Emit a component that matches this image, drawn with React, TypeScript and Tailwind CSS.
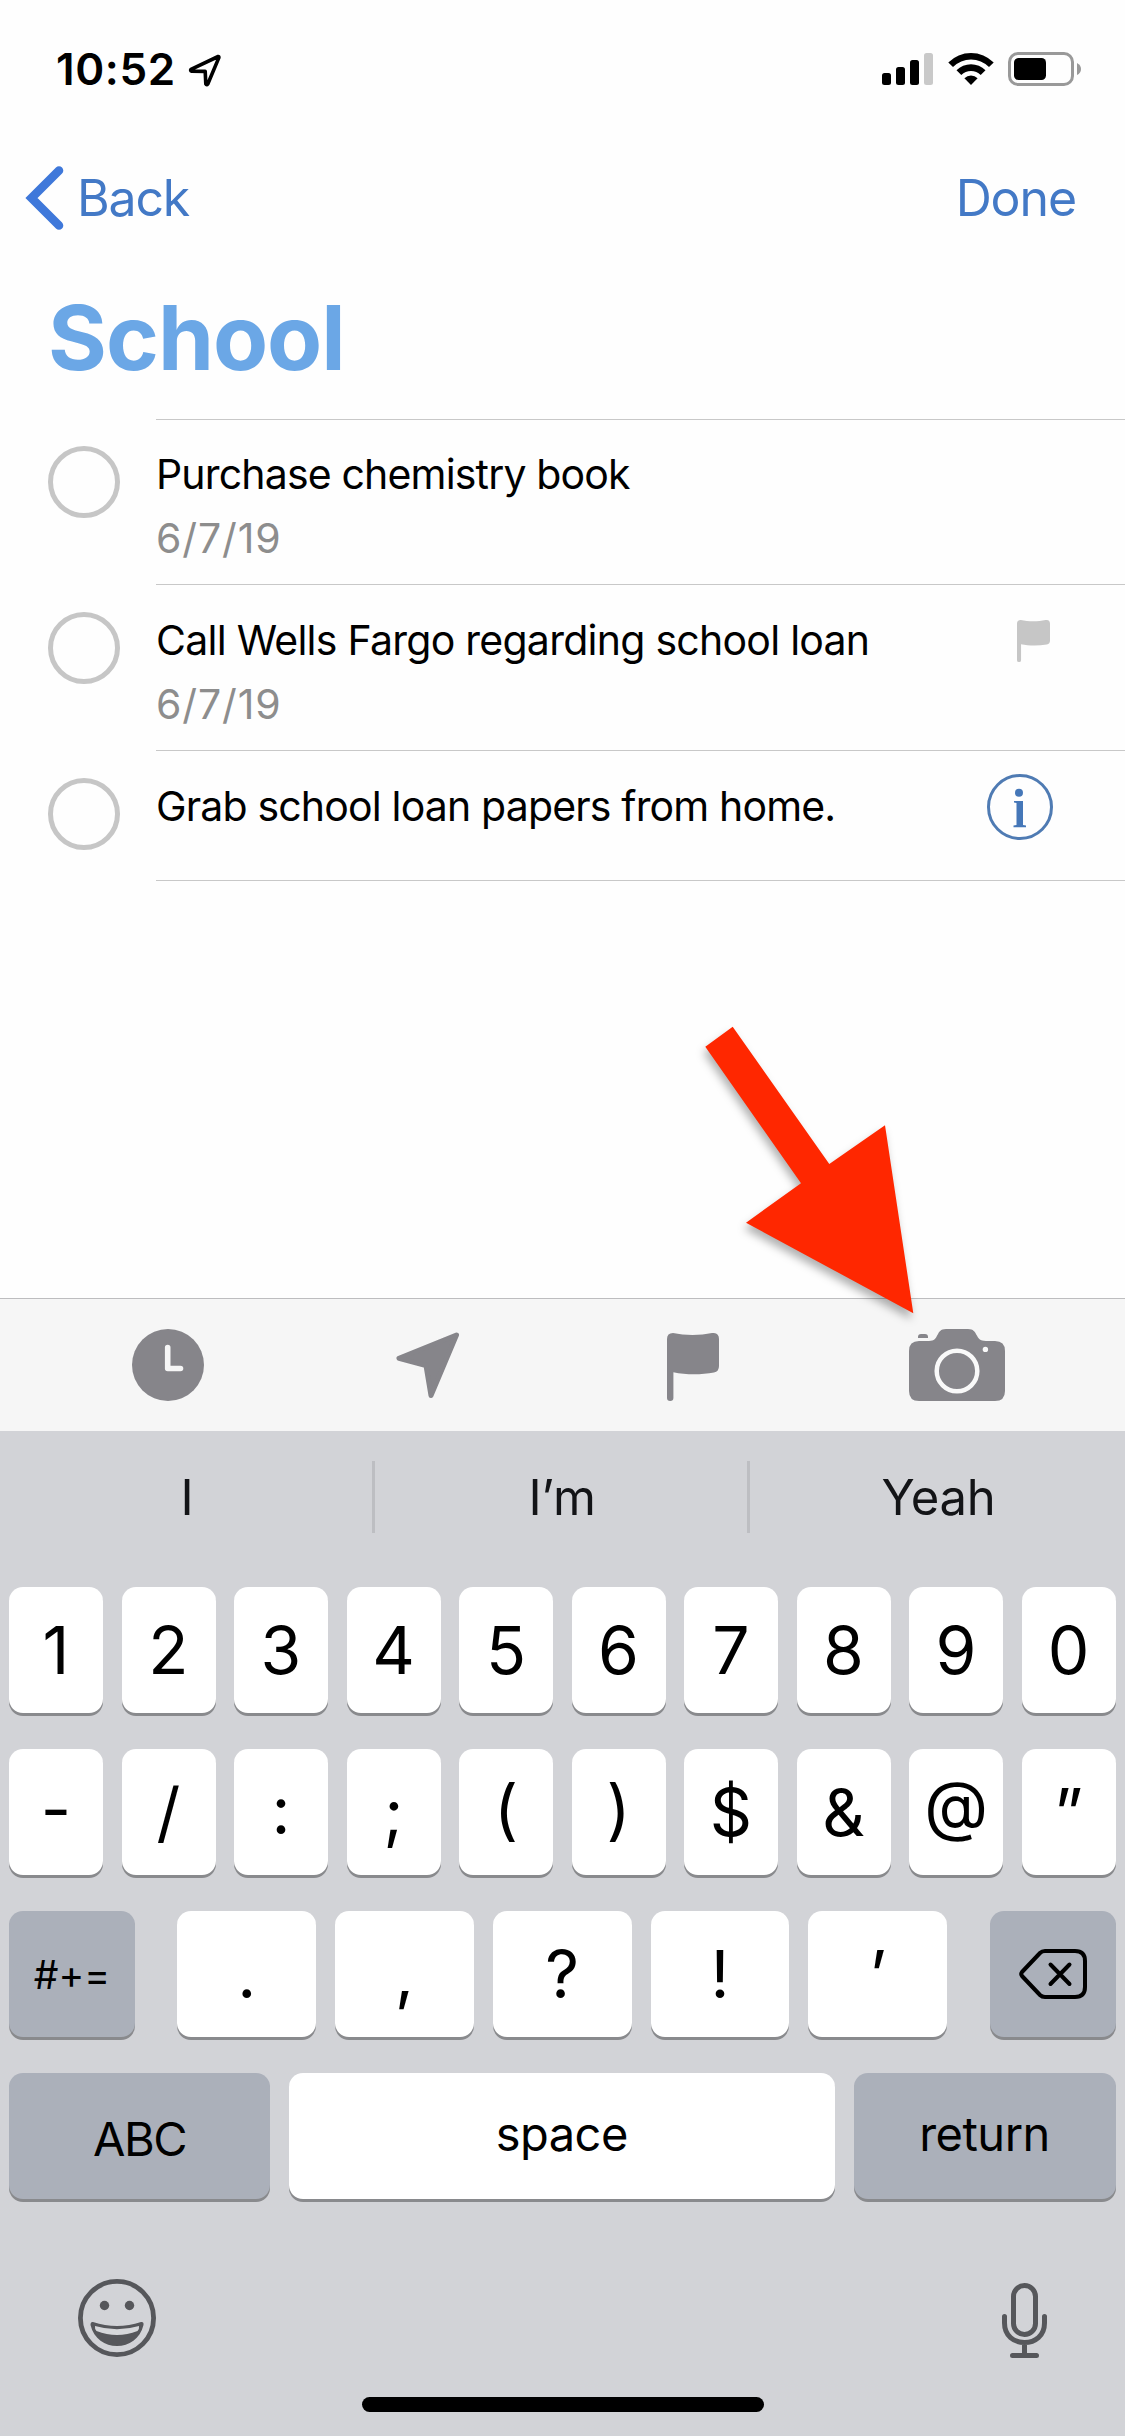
import React from 'react';
import clsx from 'clsx';

interface Reminder {
  title: string;
  date?: string;
  accessory?: 'flag' | 'info';
  rowClass: string;
  circleClass: string;
  titleClass: string;
}

const REMINDERS: Reminder[] = [
  { title: 'Purchase chemistry book', date: '6/7/19', rowClass: 'h-[165px] pt-[22px]', circleClass: 'mt-[27px]', titleClass: 'tracking-[-0.83px]' },
  { title: 'Call Wells Fargo regarding school loan', date: '6/7/19', accessory: 'flag', rowClass: 'h-[166px] pt-[23px]', circleClass: 'mt-[28px]', titleClass: 'tracking-[-0.74px]' },
  { title: 'Grab school loan papers from home.', accessory: 'info', rowClass: 'h-[130px] pt-[23px]', circleClass: 'mt-[28px]', titleClass: 'tracking-[-0.84px]' },
];

const SUGGESTIONS = ['I', 'I’m', 'Yeah'];
const NUMBER_ROW = ['1', '2', '3', '4', '5', '6', '7', '8', '9', '0'];
const SYMBOL_ROW = ['-', '/', ':', ';', '(', ')', '$', '&', '@', '”'];
const PUNCTUATION_ROW = ['.', ',', '?', '!', '’'];

function StatusBar() {
  return (
    <div className="flex h-[138px] items-center justify-between pl-[56px] pr-[43px]">
      <div className="flex items-center">
        <span className="w-[132px] text-[44px] font-semibold leading-none tracking-[0.6px] text-black">10:52</span>
        <svg width="34" height="34" viewBox="0 0 34 34" fill="none" className="mt-1">
          <path d="M30.2 2.5 L3 15.4 Q2 16.8 3.6 17.2 L17.2 17.4 L17.8 30 Q18.6 31.6 19.8 30 L30.9 3.6 Q31 2.4 30.2 2.5 Z" stroke="#000" strokeWidth="3.6" strokeLinejoin="round" />
        </svg>
      </div>
      <div className="flex items-center">
        {/* 信号 */}
        <svg width="52" height="34" viewBox="0 0 52 34">
          <rect x="0" y="21" width="9" height="12" rx="2.5" />
          <rect x="14" y="15" width="9" height="18" rx="2.5" />
          <rect x="28" y="8" width="9" height="25" rx="2.5" />
          <rect x="42" y="1" width="9" height="32" rx="2.5" fill="#c9c9c9" />
        </svg>
        {/* Wi-Fi */}
        <svg width="46" height="34" viewBox="0 0 46 34" className="ml-[14px]">
          <path d="M0.3 10.4 A32 32 0 0 1 45.7 10.4 L41 15 A25.5 25.5 0 0 0 5 15 Z" />
          <path d="M8.5 18.2 A20.6 20.6 0 0 1 37.5 18.2 L32.7 23 A13.8 13.8 0 0 0 13.3 23 Z" />
          <path d="M16.4 26.2 A9.4 9.4 0 0 1 29.6 26.2 L23 33 Z" />
        </svg>
        {/* 电池 */}
        <svg width="74" height="34" viewBox="0 0 74 34" className="ml-[14px]">
          <rect x="1.5" y="1.5" width="63" height="31" rx="8.5" fill="none" stroke="#999" strokeWidth="3" />
          <rect x="6" y="6" width="32" height="22" rx="4.5" />
          <path d="M69 11 Q73 13 73 17 Q73 21 69 23 Z" fill="#999" />
        </svg>
      </div>
    </div>
  );
}

function NavBar() {
  return (
    <div className="flex h-[120px] items-center justify-between pl-[24px] pr-[49px] text-[50px] leading-none text-[#4379c6]">
      <button className="flex items-center">
        <svg width="42" height="66" viewBox="0 0 42 66" fill="none">
          <path d="M35 5.5 L7.5 33 L35 60.5" stroke="#3f78da" strokeWidth="8.6" strokeLinecap="round" strokeLinejoin="miter" />
        </svg>
        <span className="ml-[11px] tracking-[-1.2px]">Back</span>
      </button>
      <button className="tracking-[-1.1px]">Done</button>
    </div>
  );
}

function FlagIcon({ className }: { className: string }) {
  return (
    <svg viewBox="0 0 52 68" className={className} preserveAspectRatio="none">
      <path
        fill="currentColor"
        d="M0 6 Q0 0 6 0 C18 2.6 33 2.6 45 0 Q52 -0.5 52 6 V33 Q52 38.5 47 39.5 C34 42 19 42 6.4 39.2 V65 Q6.4 68 3.2 68 Q0 68 0 65 Z"
      />
    </svg>
  );
}

function InfoIcon() {
  return (
    <svg width="66" height="66" viewBox="0 0 66 66">
      <circle cx="33" cy="33" r="31.5" fill="none" stroke="#4f7bb3" strokeWidth="3" />
      <circle cx="32" cy="18.8" r="4" fill="#4577b8" />
      <path d="M27 27 H36 V51 L39 51.6 V53.2 H26.5 V51.6 L29.5 51 V29 L27 28.6 Z" fill="#4577b8" />
    </svg>
  );
}

function ReminderRow({ title, date, accessory, rowClass, circleClass, titleClass }: Reminder) {
  return (
    <li className="flex pl-[48px]">
      <span className={clsx('size-[72px] shrink-0 rounded-full border-[5px] border-[#c6c6c6]', circleClass)} />
      <div className={clsx('ml-[36px] flex flex-1 justify-between border-t border-[#c8c8c8]', rowClass)}>
        <div className="text-[41px] leading-[64px]">
          <div className={clsx('whitespace-nowrap text-black', titleClass)}>{title}</div>
          {date && <div className="tracking-[0.9px] text-[#8d8d8d]">{date}</div>}
        </div>
        {accessory === 'flag' && <FlagIcon className="mr-[75px] mt-[12px] h-[42px] w-[33px] text-[#c6c6c6]" />}
        {accessory === 'info' && (
          <button className="mr-[72px] self-start">
            <InfoIcon />
          </button>
        )}
      </div>
    </li>
  );
}

function Toolbar() {
  return (
    <div className="flex h-[133px] items-start border-t border-[#bdbdbf] bg-[#f6f6f6] pl-[132px] pt-[30px] text-[#86858a]">
      <svg width="72" height="72" viewBox="0 0 72 72">
        <circle cx="36" cy="36" r="36" fill="currentColor" />
        <path d="M35.7 18.5 V39.5 H48.5" fill="none" stroke="#f6f6f6" strokeWidth="5.6" strokeLinecap="round" strokeLinejoin="round" />
      </svg>
      <svg width="66" height="68" viewBox="0 0 66 68" className="ml-[191px] mt-[3px]">
        <path d="M61.5 3 L4 26.3 L31 33.5 L36 63.5 Z" fill="currentColor" stroke="currentColor" strokeWidth="5" strokeLinejoin="round" />
      </svg>
      <FlagIcon className="ml-[206px] mt-[4px] h-[68px] w-[52px]" />
      <svg width="96" height="73" viewBox="0 0 96 73" className="ml-[190px]">
        <path d="M9 9 V8 Q9 5 12 5 H16 Q19 5 19 8 V9 Z" fill="currentColor" />
        <path
          d="M10 12 H20 C31 12 26 0 37 0 H59 C70 0 65 12 77 12 H86 Q96 12 96 22 V62 Q96 72 86 72 H10 Q0 72 0 62 V22 Q0 12 10 12 Z"
          fill="currentColor"
        />
        <circle cx="48" cy="42" r="20.3" fill="none" stroke="#f9f9f9" strokeWidth="4.5" />
        <circle cx="76.4" cy="20.4" r="2.7" fill="#f9f9f9" />
      </svg>
    </div>
  );
}

function Key({ children, className, dark }: { children: React.ReactNode; className?: string; dark?: boolean }) {
  return (
    <button
      className={clsx(
        'flex h-[126px] items-center justify-center rounded-[14px] text-black shadow-[0_3px_0_#898a8d]',
        dark ? 'bg-[#abb0ba]' : 'bg-white',
        className,
      )}
    >
      {children}
    </button>
  );
}

function Keyboard() {
  return (
    <div className="flex h-[1005px] flex-col bg-[#d2d3d7]">
      <div className="grid h-[156px] grid-cols-[372px_375px_378px] items-start pt-[30px] text-[49px] leading-[72px] tracking-[-0.2px] text-[#131417]">
        {SUGGESTIONS.map((word, i) => (
          <div key={word} className={clsx('h-[72px] pl-[2px] pt-px text-center', i > 0 && 'border-l-[3px] border-[#bdbec2]')}>
            {word}
          </div>
        ))}
      </div>

      <div className="flex flex-col gap-9 pl-[9px] pr-[9.5px] text-[66px] leading-none">
        <div className="grid grid-cols-10 gap-[18.5px]">
          {NUMBER_ROW.map((k) => (
            <Key key={k}>{k}</Key>
          ))}
        </div>
        {/* case 特性让括号和 @ 与大写字母居中对齐，冒号除外 */}
        <div className="grid grid-cols-10 gap-[18.5px]">
          {SYMBOL_ROW.map((k) => (
            <Key key={k} className={k === ':' ? 'pb-[5px]' : "[font-feature-settings:'case']"}>
              {k}
            </Key>
          ))}
        </div>
        <div className="flex justify-between">
          <Key dark className="w-[126px] text-[39px]">#+=</Key>
          <div className="grid w-[770px] grid-cols-5 gap-[19px]">
            {PUNCTUATION_ROW.map((k) => (
              <Key key={k}>{k}</Key>
            ))}
          </div>
          <Key dark className="w-[126px]">
            <svg width="70" height="52" viewBox="0 0 70 52" fill="none" stroke="#000" strokeWidth="4" strokeLinecap="round" strokeLinejoin="round">
              <path d="M27 3 H57 Q67 3 67 13 V39 Q67 49 57 49 H27 Q24 49 22 47 L4 28 Q2.4 26 4 24 L22 5 Q24 3 27 3 Z" />
              <path d="M32.5 16.5 L51.5 36 M51.5 16.5 L32.5 36" />
            </svg>
          </Key>
        </div>
        <div className="flex gap-[18.5px] text-[47px] tracking-[-0.5px]">
          <Key dark className="w-[261px] pt-[5px] tracking-[-1.5px]">ABC</Key>
          <Key className="flex-1 pb-[5px]">space</Key>
          <Key dark className="w-[262px] pb-[5px]">return</Key>
        </div>
      </div>

      <div className="flex items-center justify-between pl-[78px] pr-[77px] pt-[78px]">
        {/* 表情 */}
        <svg width="78" height="80" viewBox="0 0 78 80">
          <circle cx="39" cy="40" r="36.6" fill="none" stroke="#56575b" strokeWidth="4.8" />
          <circle cx="26.5" cy="27.5" r="4.7" fill="#56575b" />
          <circle cx="51.5" cy="27.5" r="4.7" fill="#56575b" />
          <path d="M15 44 Q39 52 63 44 Q66 43.5 65.5 47 C62 61 51 68 39 68 C27 68 16 61 12.5 47 Q12.5 43.5 15 44 Z" fill="#56575b" />
          <path d="M17 48 Q39 54.5 61 48 Q61.5 51 59.5 53 Q39 61 18.5 53 Q16.5 51 17 48 Z" fill="#d6d7da" />
        </svg>
        {/* 麦克风 */}
        <svg width="46" height="76" viewBox="0 0 46 76" fill="none" stroke="#56575b" strokeWidth="5" strokeLinecap="round" className="mt-[6px]">
          <rect x="11.5" y="2.5" width="22" height="49" rx="11" />
          <path d="M2.5 33.5 V40 C2.5 53 12 59.5 22.5 59.5 C33 59.5 42.5 53 42.5 40 V33.5 M22.5 60 V72 M10.5 72.5 H34.5" />
        </svg>
      </div>

      <div className="mb-6 mt-auto h-[15px] w-[402px] self-center rounded-full bg-black" />
    </div>
  );
}

// 指向相机按钮的标注箭头
function PointerArrow() {
  return (
    <svg width="240" height="320" viewBox="690 1010 240 320" className="absolute left-[690px] top-[1010px] drop-shadow-[-2px_6px_4px_rgba(0,0,0,0.3)]">
      <path d="M732.7 1026.7 L829.3 1164 L885 1125.3 L913.3 1313.3 L746 1222.7 L801 1183.3 L705.3 1046.7 Z" fill="#ff2700" />
    </svg>
  );
}

export default function App() {
  return (
    <div className="relative flex h-[2436px] w-[1125px] flex-col overflow-hidden bg-[#fefefe] font-['Inter','Liberation_Sans',sans-serif]">
      <StatusBar />
      <NavBar />
      <h1 className="h-[161px] pl-[48px] pt-[30px] text-[90px] font-bold leading-[100px] tracking-[-1px] text-[#6ba7e6]">School</h1>
      <ul className="flex flex-1 flex-col">
        {REMINDERS.map((item) => (
          <ReminderRow key={item.title} {...item} />
        ))}
        <li className="ml-[156px] h-px bg-[#c8c8c8]" />
      </ul>
      <Toolbar />
      <Keyboard />
      <PointerArrow />
    </div>
  );
}
